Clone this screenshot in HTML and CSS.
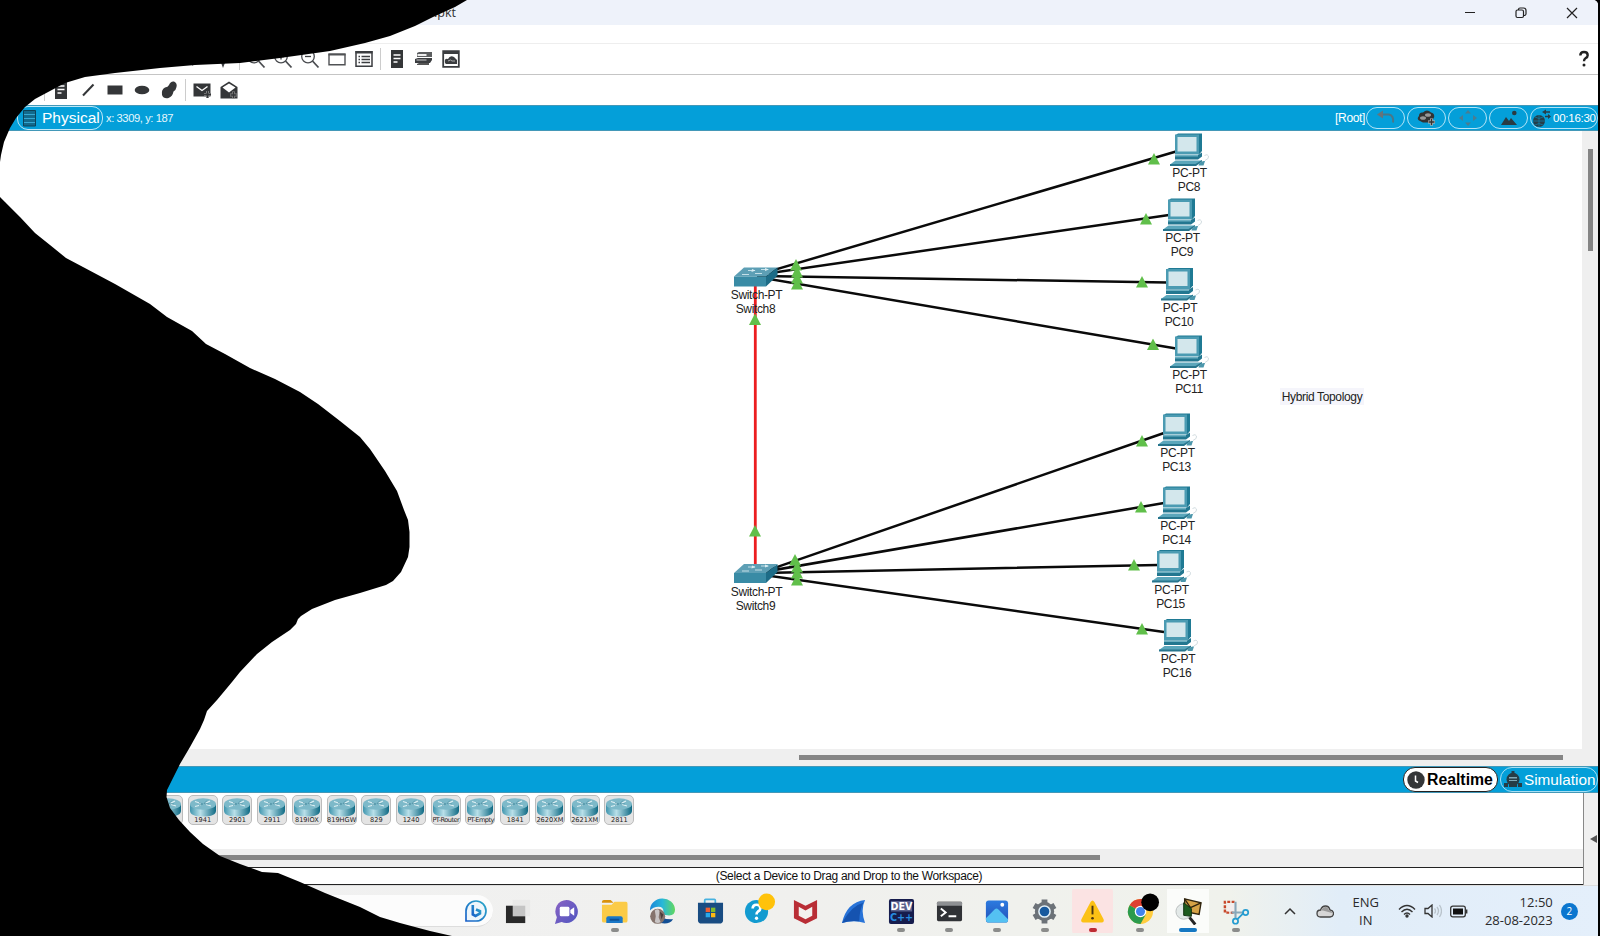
FILE: index.html
```html
<!DOCTYPE html>
<html lang="en">
<head>
<meta charset="utf-8">
<title>Packet Tracer</title>
<link rel="stylesheet" href="styles.css">
</head>
<body>
<svg class="defs" aria-hidden="true">
  <defs>
    <linearGradient id="steel" x1="0" x2="1"><stop offset="0" stop-color="#3f95ae"/><stop offset=".4" stop-color="#b9e0e9"/><stop offset="1" stop-color="#0f6a84"/></linearGradient>
    <linearGradient id="purple" x1="0" y1="0" x2="1" y2="1"><stop offset="0" stop-color="#8a63c4"/><stop offset="1" stop-color="#4f55c0"/></linearGradient>
    <linearGradient id="edge" x1="0" x2="1"><stop offset="0" stop-color="#1b86d8"/><stop offset=".5" stop-color="#28b8d8"/><stop offset="1" stop-color="#62d85e"/></linearGradient>
    <linearGradient id="bing" x1="0" y1="1" x2="1" y2="0"><stop offset="0" stop-color="#1b62c9"/><stop offset="1" stop-color="#2ba9c9"/></linearGradient>
    <linearGradient id="shot" x1="0" y1="0" x2="0" y2="1"><stop offset="0" stop-color="#2c7be0"/><stop offset="1" stop-color="#2351b8"/></linearGradient>
    <symbol id="pc" viewBox="0 0 40 33" overflow="visible">
      <path d="M5 2 8 0h24v17.500L29 21z" fill="#1f7a94"/>
      <path d="M5 1h24v20H5z" fill="#4b9bb2"/>
      <path d="M7.500 3.500h19v14.500h-19z" fill="#d3e7ec"/>
      <path d="M5 21.500h23l4-2.500v4l-4 3H5z" fill="#237790"/>
      <path d="M5 21.500h23v1.500H5z" fill="#6db0c2"/>
      <path d="M5.500 27H32l-6 4H0z" fill="#5ba6bb"/>
      <path d="M0 30.500h25.500L32 26.500v1.500l-6 4.500H0z" fill="#27758d"/>
      <path d="M29 30q2-3 6-2.500l-1.500 4.500h-5z" fill="#4b96ab"/>
      <path d="M35 27q4.500-2 3.500-4.500T34.500 22" fill="none" stroke="#d3dde1"/>
    </symbol>
    <symbol id="switch" viewBox="0 0 44 21">
      <path d="M0 10 10 1h33.500L32 10z" fill="#5d9fb5"/>
      <path d="M0 10h32v10H0z" fill="#398ba5"/>
      <path d="M32 10 43.500 1v8L32 20z" fill="#1d6c87"/>
      <path d="M14 4h7M27 3h7M8 8h7M21 7h7" stroke="#c4e0e8" stroke-width="1.100"/>
      <path d="m18 2.500 3.500 1.500-4 1.500M31 1.500l4 1.500-4 1.500" fill="#d8edf3"/>
    </symbol>
    <symbol id="tri" viewBox="0 0 12 12"><path d="M6 0l6 11.500H0z" fill="#60bf4a"/></symbol>
    <symbol id="router" viewBox="0 0 26 19">
      <path d="M0 6v6.500q0 6 13 6t13-6V6z" fill="url(#steel)"/>
      <ellipse cx="13" cy="6" rx="13" ry="5.700" fill="#7db9c9"/>
      <path d="m5 3.500 6 2M20 3l-5 2.500M5 8.500l6-1.500M21 8l-5-1.500" stroke="#dff0f4" stroke-width="1.200"/>
      <path d="m9 4.500 4 1.500-4 1.500M17 2.500l-3 3 5 .5" fill="none" stroke="#4b8ea2" stroke-width=".7"/>
    </symbol>
    <symbol id="note" viewBox="0 0 24 24"><path d="M6 3h12v18H6z" fill="#343638"/><path d="M8.500 8h7M8.500 11.500h7M8.500 15h4" stroke="#fff" stroke-width="1.500"/></symbol>
    <symbol id="mag" viewBox="0 0 24 24"><g fill="none" stroke="#4a4c50"><circle cx="10" cy="9.500" r="6.300" stroke-width="1.300"/><path d="m14.500 14 6 6.500" stroke-width="1.800"/></g></symbol>
  </defs>
</svg>

<div class="window">
  <header class="titlebar">
    <span class="filename">.pkt</span>
    <div class="controls">
      <svg width="12" height="12"><path d="M1 5.500h10" stroke="#222"/></svg>
      <svg width="12" height="12" fill="none" stroke="#222" stroke-width="1.200"><rect x="1" y="3" width="7.500" height="7.500" rx="1.500"/><path d="M3.500 3V2.500Q3.500 1 5 1h3.500Q11 1 11 3.500V7q0 1.500-2 1.500"/></svg>
      <svg width="12" height="12"><path d="m1 1 10 10M11 1 1 11" stroke="#222" stroke-width="1.200"/></svg>
    </div>
  </header>
  <div class="menubar"></div>

  <div class="toolbar main-tools">
    <svg viewBox="0 0 24 24"><path d="m8 18 5-6" stroke="#3b3d40" stroke-width="2"/></svg>
    <svg viewBox="0 0 24 24"><path d="M9 13h6l-3 8z" fill="#3b3d40"/></svg>
    <i class="sep"></i>
    <svg><use href="#mag"/></svg>
    <svg><use href="#mag"/><path d="M7 9.500h6M10 6.500v6" stroke="#3b3d40" stroke-width="1.300"/></svg>
    <svg><use href="#mag"/><path d="M7 9.500h6" stroke="#3b3d40" stroke-width="1.300"/></svg>
    <svg viewBox="0 0 24 24"><path d="M4 7.200h16v10.600H4z" fill="#fff" stroke="#505255" stroke-width="1.400"/><path d="M3.500 6.500h17v2h-17z" fill="#505255"/></svg>
    <svg viewBox="0 0 24 24"><path d="M4 4.700h16v14.600H4z" fill="#fff" stroke="#3b3d40" stroke-width="1.500"/><path d="M3.500 4h17v2.500h-17z" fill="#3b3d40"/><path d="M9.500 9.500H18M9.500 12.500H18M9.500 15.500H18M6.500 9.500H8M6.500 12.500H8M6.500 15.500H8" stroke="#3b3d40" stroke-width="1.400"/></svg>
    <i class="sep"></i>
    <svg><use href="#note"/></svg>
    <svg viewBox="0 0 24 24"><path d="m5 6 2-1h13v5H5z" fill="#5c5e60"/><path d="M5.500 7h9v2h-9z" fill="#eee"/><path d="m3 12 3-1h14v2l-2 3H3z" fill="#3b3d40"/><path d="m5 17 2-1h10v2H5z" fill="#555"/><path d="M4.500 13h10" stroke="#ccc"/></svg>
    <svg viewBox="0 0 24 24"><path d="M4.200 4.200h15.600v15.600H4.200z" fill="#fff" stroke="#3b3d40" stroke-width="1.800"/><path d="M4 4h16v3H4z" fill="#3b3d40"/><path d="M6 16q-1-5 3-4 2-4 6-2l3 3v4H7z" fill="#3b3d40"/><path d="M9 14q3-2 4 0h3" fill="none" stroke="#aaa"/></svg>
    <svg class="help" viewBox="0 0 12 18"><path d="M2.300 5.500Q2.300 2 6 2t3.700 3.200Q9.700 7 7.500 8.300 6 9.200 6 11.300" fill="none" stroke="#222" stroke-width="2.400"/><circle cx="6" cy="15" r="1.500" fill="#222"/></svg>
  </div>

  <div class="toolbar draw-tools">
    <i class="sep"></i>
    <svg><use href="#note"/></svg>
    <svg viewBox="0 0 24 24"><path d="M7 17.500 17.500 6.500" stroke="#343638" stroke-width="2"/></svg>
    <svg viewBox="0 0 24 24"><path d="M4.500 7.500h15v9h-15z" fill="#343638"/></svg>
    <svg viewBox="0 0 24 24"><ellipse cx="12" cy="12" rx="7.300" ry="4.300" fill="#343638"/></svg>
    <svg viewBox="0 0 24 24"><path d="M12 7q1.500-4 5-3.500 3.500 1.500 2.500 5.500-.5 3-3 4.500-1 5-5 6.500-5 1-6.500-3Q4 11.500 8 9.500q3-.5 4-2.500z" fill="#343638"/></svg>
    <i class="sep"></i>
    <svg viewBox="0 0 24 24"><path d="M3.500 5.500h17v13h-17z" fill="#343638"/><path d="m6.500 8.500 5.500 4 5.500-4" fill="none" stroke="#fff" stroke-width="1.400"/><path d="M17.500 13v7M14 16.500h7" stroke="#aaa" stroke-width="3"/><path d="M17.500 13v7M14 16.500h7" stroke="#343638" stroke-width="1.800"/></svg>
    <svg viewBox="0 0 24 24"><path d="m3.500 9 8.500-5.500L20.500 9v11.500h-17z" fill="#343638"/><path d="m5.500 9.500 6.500-4 6.500 4-6.500 5z" fill="#fff"/><path d="M16.500 13.500v7M13 17h7" stroke="#888" stroke-width="3"/><path d="M16.500 14v6M13.500 17h6" stroke="#343638" stroke-width="1.500"/></svg>
  </div>

  <div class="bluebar view-bar">
    <div class="tab-physical">
      <svg width="13" height="17"><path d="M.5.500h12v15.500H.5z" fill="#126a8d" stroke="#0d4258"/><path d="M1 4.500h11M1 8.500h11M1 12.500h11" stroke="#35a8d3" stroke-width="1.200"/></svg>
      <span>Physical</span>
    </div>
    <span class="coords">x: 3309, y: 187</span>
    <span class="root">[Root]</span>
    <div class="pills">
      <span class="pill"><svg width="20" height="16"><path d="M4 4.500h9q5 1 4 8" fill="none" stroke="#4a7788" stroke-width="2"/><path d="m1 4.500 6-4v8z" fill="#67747a"/></svg></span>
      <span class="pill"><svg width="20" height="16"><path d="M3 11q-4-2-1-5 0-4 4-3.500 4-4 8 0 4 1 3 5l-3 5H6z" fill="#333"/><ellipse cx="6" cy="8" rx="3" ry="1.800" fill="#999"/><ellipse cx="11" cy="5" rx="3" ry="1.800" fill="#999"/><path d="M14.500 8.500v7M11 12h7" stroke="#bbb" stroke-width="3"/><path d="M14.500 9v6M11.500 12h6" stroke="#333" stroke-width="1.500"/></svg></span>
      <span class="pill"><svg width="20" height="16" fill="#4b7d91"><path d="M10 0l3 3.500H7zM10 16l3-3.500H7zM1 8l4-3v6zM19 8l-4-3v6z"/></svg></span>
      <span class="pill"><svg width="20" height="16" fill="#293b43"><path d="m2 15 5-8 3 4 2-3 6 7zM13 3a2.300 2.300 0 1 1 4.600 0 2.300 2.300 0 0 1-4.600 0z"/></svg></span>
      <span class="pill clock"><svg width="19" height="19"><circle cx="7" cy="12" r="6" fill="#263d47"/><path d="M1 12h12M7 6v12M3 8q4 3 8 0M3 16q4-3 8 0" fill="none" stroke="#0d7da7" stroke-width=".8"/><path d="M18 3h-5M18 7.500h-5" stroke="#263d47" stroke-width="1.500"/><path d="m10 3 4-2.500v5zM19 7.500 16 5v5z" fill="#263d47"/></svg>00:16:30</span>
    </div>
  </div>

  <main class="workspace">
    <svg class="canvas" viewBox="0 131 1582 618">
      <g stroke="#0a0a0a" stroke-width="2.500">
        <path d="M757 275 1176 151.500M757 275 1169 215M757 276 1167 282.500M757 277 1176 348.500"/>
        <path d="M757 574 1164 433M757 573 1164 503M757 573 1158 565M757 574 1164 632"/>
      </g>
      <path d="M755.300 286v279" stroke="#ec1e20" stroke-width="2.800"/>
      <g>
        <use href="#switch" x="734" y="266.500" width="44" height="21"/>
        <use href="#switch" x="734" y="563" width="44" height="21"/>
        <use href="#pc" x="1170" y="133.500" width="40" height="33"/>
        <use href="#pc" x="1163" y="198.500" width="40" height="33"/>
        <use href="#pc" x="1161" y="268" width="40" height="33"/>
        <use href="#pc" x="1170" y="335.500" width="40" height="33"/>
        <use href="#pc" x="1158" y="413.500" width="40" height="33"/>
        <use href="#pc" x="1158" y="486.500" width="40" height="33"/>
        <use href="#pc" x="1152" y="550" width="40" height="33"/>
        <use href="#pc" x="1159" y="619" width="40" height="33"/>
      </g>
      <g>
        <use href="#tri" x="1148" y="153" width="12" height="12"/>
        <use href="#tri" x="1140" y="213" width="12" height="12"/>
        <use href="#tri" x="1136" y="276" width="12" height="12"/>
        <use href="#tri" x="1147" y="338.500" width="12" height="12"/>
        <use href="#tri" x="1136" y="435" width="12" height="12"/>
        <use href="#tri" x="1135" y="501" width="12" height="12"/>
        <use href="#tri" x="1128" y="559" width="12" height="12"/>
        <use href="#tri" x="1136" y="623" width="12" height="12"/>
        <use href="#tri" x="790" y="259" width="12" height="12"/>
        <use href="#tri" x="791" y="266" width="12" height="12"/>
        <use href="#tri" x="791" y="272" width="12" height="12"/>
        <use href="#tri" x="791" y="278" width="12" height="12"/>
        <use href="#tri" x="789" y="554" width="12" height="12"/>
        <use href="#tri" x="791" y="561" width="12" height="12"/>
        <use href="#tri" x="791" y="567" width="12" height="12"/>
        <use href="#tri" x="791" y="574" width="12" height="12"/>
        <use href="#tri" x="749" y="313.500" width="12" height="12"/>
        <use href="#tri" x="749" y="525" width="12" height="12"/>
      </g>
      <rect x="1280" y="388" width="84" height="17" fill="#f5f5fb"/>
      <g class="labels">
        <text x="756.500" y="299">Switch-PT</text><text x="755.500" y="313">Switch8</text>
        <text x="756.500" y="596">Switch-PT</text><text x="755.500" y="610">Switch9</text>
        <text x="1189.500" y="177">PC-PT</text><text x="1189" y="191">PC8</text>
        <text x="1182.500" y="242">PC-PT</text><text x="1182" y="256">PC9</text>
        <text x="1180" y="311.500">PC-PT</text><text x="1179" y="325.500">PC10</text>
        <text x="1189.500" y="379">PC-PT</text><text x="1189" y="393">PC11</text>
        <text x="1177.500" y="457">PC-PT</text><text x="1176.500" y="471">PC13</text>
        <text x="1177.500" y="530">PC-PT</text><text x="1176.500" y="544">PC14</text>
        <text x="1171.500" y="593.500">PC-PT</text><text x="1170.500" y="607.500">PC15</text>
        <text x="1178" y="662.500">PC-PT</text><text x="1177" y="676.500">PC16</text>
        <text x="1322" y="401">Hybrid Topology</text>
      </g>
    </svg>
    <div class="vscroll"><i></i></div>
  </main>
  <div class="hscroll canvas-scroll"><i></i></div>

  <div class="bluebar mode-bar">
    <span class="mode realtime"><svg width="18" height="18"><circle cx="9" cy="9" r="8.700" fill="#343638"/><path d="M8.500 4.500V10l2.500 1.500" fill="none" stroke="#fff" stroke-width="1.500"/></svg>Realtime</span>
    <span class="mode simulation"><svg width="18" height="17" fill="#263d47"><path d="M7.500 0h3v3h-3z"/><circle cx="9" cy="8.300" r="6.500"/><path d="M0 12h4v4H0zM14 12h4v4h-4zM5 13h8v3H5z"/><path d="M5 6h8v1.500H5zM5 9h8v1H5z" fill="#7fa9b8"/></svg>Simulation</span>
  </div>

  <div class="bottom">
    <section class="devices">
      <div class="device-list">
        <div class="device"><svg><use href="#router"/></svg><span>4331</span></div>
        <div class="device"><svg><use href="#router"/></svg><span>1941</span></div>
        <div class="device"><svg><use href="#router"/></svg><span>2901</span></div>
        <div class="device"><svg><use href="#router"/></svg><span>2911</span></div>
        <div class="device"><svg><use href="#router"/></svg><span>819IOX</span></div>
        <div class="device"><svg><use href="#router"/></svg><span>819HGW</span></div>
        <div class="device"><svg><use href="#router"/></svg><span>829</span></div>
        <div class="device"><svg><use href="#router"/></svg><span>1240</span></div>
        <div class="device tight"><svg><use href="#router"/></svg><span>PT-Router</span></div>
        <div class="device tight"><svg><use href="#router"/></svg><span>PT-Empty</span></div>
        <div class="device"><svg><use href="#router"/></svg><span>1841</span></div>
        <div class="device"><svg><use href="#router"/></svg><span>2620XM</span></div>
        <div class="device"><svg><use href="#router"/></svg><span>2621XM</span></div>
        <div class="device"><svg><use href="#router"/></svg><span>2811</span></div>
      </div>
      <div class="hscroll device-scroll"><i></i></div>
      <div class="status">(Select a Device to Drag and Drop to the Workspace)</div>
    </section>
    <aside class="collapse"><svg width="7" height="8"><path d="M0 4l7-4v8z" fill="#555"/></svg></aside>
  </div>

  <footer class="taskbar">
    <div class="search"><svg width="24" height="24" viewBox="0 0 24 24"><path d="M2 22V12A10 10 0 1 1 12 22z" fill="#eef6fb" stroke="url(#bing)" stroke-width="1.700"/><path d="M8.800 6v9.500l2.700 1.500 4.500-2.500v-2.300l-4-1.700" fill="none" stroke="url(#bing)" stroke-width="2.600"/></svg></div>
    <div class="apps">
      <div class="app"><svg viewBox="0 0 28 28"><path d="M1 8h20v18H1z" fill="#292929"/><path d="M8 2h18v17H8z" fill="#e6e6e6" opacity=".82"/></svg></div>
      <div class="app"><svg viewBox="0 0 28 28"><path d="M14 2a12 12 0 1 1-5 23l-7 2 2-7A12 12 0 0 1 14 2z" fill="url(#purple)"/><rect x="7" y="9" width="10" height="10" rx="1.500" fill="#fff"/><path d="m18 12.500 4-3v9l-4-3z" fill="#fff"/></svg></div>
      <div class="app run"><svg viewBox="0 0 28 28"><path d="M1 4q0-2 2-2h7l3 3H1z" fill="#d9920c"/><path d="M1 7h10l3-3h12q1.500 0 1.500 2v17.500q0 2-2 2H3q-2 0-2-2z" fill="#fbcb47"/><path d="M5.500 26v-5q0-2 2-2h13q2 0 2 2v5z" fill="#1a78c8"/><path d="M9 22.500h10" stroke="#0e4f94" stroke-width="2"/></svg></div>
      <div class="app"><svg viewBox="0 0 28 28"><path d="M1 13A13 12 0 0 1 27 12q0 7-8 6-5 0-4-4 0-5-5-5-6 0-9 4z" fill="url(#edge)"/><path d="M12 26q-6-7 0-11 0 8 13 7-4 6-13 4z" fill="#124f95"/><circle cx="9" cy="19" r="7.800" fill="#85736c"/><path d="M6 13q4-3 5 1l-1 6 2 5q-3 2-6 0l1-6z" fill="#c9c5c5"/><path d="m11 14 4 3-2 5z" fill="#4c3e3c"/></svg></div>
      <div class="app"><svg viewBox="0 0 28 28"><path d="M8 6V2.500q0-1 1-1h9q1 0 1 1V6" fill="none" stroke="#47b2e0" stroke-width="1.800"/><path d="M1 5h26v18q0 3.500-4 3.500H5q-4 0-4-3.500z" fill="#194c82"/><path d="M9 10h4.500v4.500H9z" fill="#f05c31"/><path d="M14.500 10H19v4.500h-4.500z" fill="#7fba2c"/><path d="M9 15.500h4.500V20H9z" fill="#28a8ea"/><path d="M14.500 15.500H19V20h-4.500z" fill="#fdb913"/></svg></div>
      <div class="app"><svg viewBox="0 0 28 28" overflow="visible"><circle cx="13" cy="14" r="12" fill="#139bd0"/><path d="M9 11q0-4 4-4t4 3.500q0 2-2.500 3.500-1.500 1-1.500 3" fill="none" stroke="#fff" stroke-width="2.800"/><circle cx="13" cy="21" r="1.700" fill="#fff"/><circle cx="23.500" cy="4" r="8.700" fill="#ffc20a"/></svg></div>
      <div class="app"><svg viewBox="0 0 28 28"><path d="m2 2 12 6 12-6v19l-12 6-12-6z" fill="#b92d35"/><path d="m7 9 7 4 7-4v9.500l-7 3.500-7-3.500z" fill="#f3f0ee"/></svg></div>
      <div class="app"><svg viewBox="0 0 28 28"><path d="M2 26Q7 4 26 2q-5 10 0 24-12-4-24 0z" fill="#2873d8"/><path d="M2 26Q12 8 24 5q-4 9-4 19-10-1-18 2z" fill="#1553b0"/></svg></div>
      <div class="app run"><svg viewBox="0 0 28 28"><rect x="1" y="1" width="26" height="26" rx="2" fill="#161c4d"/><path d="M3 3h22v11H3z" fill="#59618c"/><text class="dev" x="14" y="12.500">DEV</text><text class="dev cpp" x="14" y="24">C++</text></svg></div>
      <div class="app run"><svg viewBox="0 0 28 28"><rect x="1" y="4" width="26" height="20" rx="1.500" fill="#303236"/><path d="M1 5q0-1 1-1h24q1 0 1 1v3H1z" fill="#8e9093"/><path d="m5 11 5 4-5 4M13 19h8" fill="none" stroke="#fff" stroke-width="2"/></svg></div>
      <div class="app run"><svg viewBox="0 0 28 28"><rect x="3" y="2.500" width="23" height="23" rx="3" fill="url(#shot)"/><path d="m3 21 9-9q2-2 4 0l10 10q0 3.500-3 3.500H6q-3 0-3-4z" fill="#54c1f2"/><circle cx="20" cy="7" r="2" fill="#fff"/></svg></div>
      <div class="app run"><svg viewBox="0 0 28 28"><g fill="#6c7278"><circle cx="14" cy="14" r="10"/><g stroke="#6c7278" stroke-width="6"><path d="M14 1.500v25M3.200 7.800l21.600 12.400M3.200 20.200 24.800 7.800"/></g></g><circle cx="14" cy="14" r="5.800" fill="#17599e" stroke="#e3f0f8" stroke-width="1.600"/></svg></div>
      <div class="app run alert"><svg viewBox="0 0 28 28"><path d="M14 2.500q1 0 2 1.700L25.500 22q1 3-2 3.500h-19q-3-.5-2-3.500L12 4.200q1-1.700 2-1.700z" fill="#fcc115"/><path d="M14 8v9" stroke="#4c3510" stroke-width="2"/><circle cx="14" cy="21" r="1.400" fill="#4c3510"/></svg></div>
      <div class="app run"><svg viewBox="0 0 28 28" overflow="visible"><circle cx="14" cy="14" r="13" fill="#ffcd40"/><path d="M14 14 2.700 7.500A13 13 0 0 1 25.300 7.500z" fill="#df4032"/><path d="M2.700 7.500A13 13 0 0 0 14 27l5.500-10L14 14z" fill="#2b9b4d"/><path d="M14 1a13 13 0 0 1 11.300 6.500H14z" fill="#df4032"/><circle cx="14" cy="14" r="6" fill="#fff"/><circle cx="14" cy="14" r="4.700" fill="#4284ee"/><circle cx="24" cy="4.500" r="9.200" fill="#000"/></svg></div>
      <div class="app run active"><svg viewBox="0 0 28 28"><circle cx="9" cy="14" r="8" fill="#e3e9e8" stroke="#b8bdbd"/><path d="m10 1 17 4-2 12-15-3z" fill="#d6a246" stroke="#30240e" stroke-width="1.400"/><path d="m10 1 6 9 11-5" fill="none" stroke="#30240e" stroke-width="1.400"/><path d="m9 5 8 6v8l-8-1z" fill="#1d5a1e" stroke="#123312"/><path d="m15 20 6 7.500" stroke="#252525" stroke-width="3"/></svg></div>
      <div class="app run"><svg viewBox="0 0 28 28" overflow="visible"><path d="M13 4H3v11h11" fill="none" stroke="#c8492c" stroke-width="2.500" stroke-dasharray="3 1.500"/><path d="M5.500 6h10v8h-10z" fill="#f4eeee"/><path d="M14 4v17M10 15h12" stroke="#88a8ba" stroke-width="2.200"/><g fill="none" stroke="#269cd0" stroke-width="1.800"><circle cx="24.500" cy="15" r="2.700"/><circle cx="14" cy="24" r="2.700"/><path d="m22 16-6 6"/></g></svg></div>
    </div>
    <div class="tray">
      <svg class="chevron" width="12" height="8"><path d="m1 7 5-5 5 5" fill="none" stroke="#333" stroke-width="1.500"/></svg>
      <svg class="cloud" width="18" height="13"><path d="M4.500 12Q1 12 1 8.500T4.500 5Q6 1 9.500 1T14 5q3.500.5 3.500 3.500T14 12z" fill="#d6d6d6" stroke="#444" stroke-width="1.300"/><path d="M5 5.500Q7 2 9.500 2T13 5.500q3 .5 3 2.500L7 5.500z" fill="#999"/></svg>
      <div class="lang"><span>ENG</span><span>IN</span></div>
      <svg class="wifi" width="18" height="14" fill="none" stroke="#333" stroke-width="1.400"><path d="M1 5.500q8-8 16 0M3.500 8q5.500-5.500 11 0M6 10.500q3-3 6 0"/><circle cx="9" cy="12" r="1" fill="#333"/></svg>
      <svg class="speaker" width="18" height="14" fill="none" stroke="#333" stroke-width="1.300"><path d="M1 4.500h3L8 1v12L4 9.500H1z"/><path d="M10.500 4.500q2 2.500 0 5M13 3q3 4 0 8M15.500 1q4 6 0 12" stroke="#b9c3cb"/></svg>
      <svg class="battery" width="18" height="13"><rect x=".7" y="1.200" width="14.600" height="10.600" rx="2" fill="none" stroke="#333" stroke-width="1.300"/><path d="M3 3.500h10v6H3z" fill="#111"/><path d="M16.500 4.500v4" stroke="#333" stroke-width="1.800"/></svg>
      <div class="datetime"><span>12:50</span><span>28-08-2023</span></div>
      <span class="count">2</span>
    </div>
  </footer>
</div>

<svg class="blob" viewBox="0 0 470 936" width="470" height="936">
  <path d="M0 0H467L455 7 433 17 415 26 390 36 365 43 330 51 280 58 240 63 195 65 160 68 115 73 85 77 65 83 50 91 35 99 25 107 16 118 10 128 4 142 1 155 0 162zM0 197 5 202 20 217 35 233 50 245 66 258 83 267 115 284 150 304 167 317 192 331 206 344 225 354 250 368 275 379 300 392 318 404 340 421 360 437 370 449 385 471 397 491 404 510 408 520 409.500 532 409.500 547 408 557 401 572 393 581 386 585 360 593 335 600 312 609 301 616 298 619 296 624 290 630 272 642 257 654 240 672 232 682 217 700 207 711 204 720 200 729 190 747 180 764 173 778 167 790 166.500 797 170 808 179 820 190 832 203 844 220 856 240 864 262 872 278 873 300 882 325 893 360 907 380 917 400 923 430 931 452 936H0z"/>
</svg>
</body>
</html>
```
FILE: styles.css
```css
* { box-sizing: border-box; }

body {
  margin: 0;
  width: 1600px;
  height: 936px;
  overflow: hidden;
  background: #000;
  font-family: "Liberation Sans", Arial, sans-serif;
}

svg { display: block; flex: none; }

.defs { position: absolute; width: 0; height: 0; }

.window {
  width: 1598px;
  height: 936px;
  display: flex;
  flex-direction: column;
  background: #fff;
  border-top-right-radius: 5px;
  overflow: hidden;
}

/* Title and tool bars */
.titlebar {
  height: 25px;
  flex: none;
  display: flex;
  align-items: center;
  justify-content: space-between;
  padding: 0 20px 0 434px;
  background: #eef2fa;
}
.filename { font: 12.5px "Open Sans", sans-serif; color: #333; }
.controls { display: flex; gap: 39px; }
.menubar { height: 19px; flex: none; border-bottom: 1px solid #eee; }

.toolbar {
  display: flex;
  align-items: center;
  gap: 3px;
  flex: none;
}
.toolbar svg { width: 24px; height: 24px; }
.toolbar .sep { width: 1px; height: 22px; margin: 0 1px; background: #ccc; }
.main-tools { height: 31px; padding: 0 8px 0 184px; border-bottom: 1px solid #c5c5c5; }
.toolbar .help { width: 12px; height: 18px; margin-left: auto; }
.draw-tools { height: 30px; padding-left: 43px; }

.bluebar {
  flex: none;
  display: flex;
  align-items: center;
  height: 26px;
  background: #049fd9;
  color: #fff;
  border-top: 1px solid #4398b8;
  border-bottom: 1px solid #4398b8;
}
.tab-physical {
  display: flex;
  align-items: center;
  gap: 6px;
  width: 86px;
  height: 24px;
  margin-left: 17px;
  padding-left: 5px;
  border: 1px solid #bde8f8;
  border-radius: 11px;
  font-size: 15.5px;
}
.coords { margin-left: 3px; padding-bottom: 1px; font-size: 11.2px; letter-spacing: -0.42px; color: #e6f7fd; }
.root { margin-left: auto; padding-bottom: 1px; font-size: 12px; letter-spacing: -0.35px; }
.pills { display: flex; gap: 2px; margin-left: 1px; }
.pill {
  display: flex;
  align-items: center;
  justify-content: center;
  width: 39px;
  height: 22px;
  border: 1px solid #b4e5f7;
  border-radius: 11px;
}
.pill.clock { width: 68px; gap: 2px; justify-content: flex-start; padding-left: 1px; font-size: 11.5px; letter-spacing: -0.25px; }

/* Workspace */
.workspace { height: 618px; flex: none; display: grid; grid-template-columns: 1582px 16px; }
.canvas { width: 1582px; height: 618px; }
.labels { font-size: 12px; letter-spacing: -0.35px; fill: #222; text-anchor: middle; }
.vscroll { background: #efefef; padding: 18px 5px 0 6px; }
.vscroll i { display: block; height: 102px; background: #858585; }
.hscroll { flex: none; background: #efefef; padding-top: 6px; }
.hscroll i { display: block; height: 5px; background: #858585; }
.canvas-scroll { height: 17px; padding-left: 799px; }
.canvas-scroll i { width: 764px; }

.mode-bar { height: 27px; justify-content: flex-end; gap: 2px; }
.mode {
  display: flex;
  align-items: center;
  height: 25px;
  border-radius: 12px;
  font-size: 15.3px;
}
.realtime { width: 95px; gap: 2px; padding-left: 3px; background: #fff; color: #000; border: 1px solid #222; font-weight: bold; font-size: 15.8px; }
.simulation { width: 98px; gap: 2px; padding-left: 3px; border: 1px solid #a7dff4; white-space: nowrap; }

/* Device palette */
.bottom { flex: none; height: 92px; display: grid; grid-template-columns: 1584px 14px; }
.devices { display: flex; flex-direction: column; border-right: 1px solid #888; }
.device-list { display: flex; gap: 4.72px; height: 56px; padding: 2px 0 0 153px; }
.device {
  width: 30px;
  height: 30px;
  display: flex;
  flex-direction: column;
  align-items: center;
  border: 1px solid #bcbcbc;
  border-radius: 5px;
  background: #e4e4e4;
  padding-top: 2px;
}
.device svg { width: 26px; height: 19px; }
.device span { font: 6.6px/7px "DejaVu Sans", sans-serif; color: #222; white-space: nowrap; }
.device.tight span { letter-spacing: -0.55px; }
.device-scroll { height: 18px; }
.device-scroll i { width: 1100px; }
.status {
  height: 18px;
  border: solid #222;
  border-width: 1px 0 1px;
  padding-left: 115px;
  text-align: center;
  font-size: 12px;
  letter-spacing: -0.33px;
  line-height: 17px;
  color: #111;
}
.collapse { display: flex; align-items: center; justify-content: flex-end; padding-right: 1px; background: #f0f0f0; }

/* Taskbar */
.taskbar {
  height: 51px;
  flex: none;
  display: flex;
  align-items: center;
  background: linear-gradient(90deg, #f1f1f2 0, #f0f0ee 800px, #f0f2ec 1230px, #e1edf8 1340px, #e4effb 1598px);
  border-top: 1px solid #ddd;
}
.search {
  width: 493px;
  height: 32px;
  display: flex;
  align-items: center;
  justify-content: flex-end;
  padding-right: 5px;
  border-radius: 16px;
  background: #fcfcfc;
  border-bottom: 1px solid #ddd;
}
.apps { display: flex; margin-left: 2px; }
.app { position: relative; display: grid; place-items: center; width: 47.8px; height: 44px; }
.app svg { width: 27px; height: 27px; }
.app.run::after {
  content: "";
  position: absolute;
  bottom: 1px;
  left: 20px;
  width: 8px;
  height: 4px;
  border-radius: 2px;
  background: #8b8c8b;
}
.app.alert { background: #fbe3e3; background-clip: content-box; padding: 0 3px; border-radius: 4px; }
.app.alert::after { background: #bd2c33; }
.app.active { background: #fbfcfa; background-clip: content-box; padding: 0 3px; }
.app.active::after { left: 15px; width: 18px; background: #1678c2; }
.dev { font: bold 10px "DejaVu Sans", sans-serif; fill: #fff; text-anchor: middle; }
.dev.cpp { fill: #278de0; }

.tray { display: flex; align-items: center; margin-left: 24px; color: #2b2b2b; font: 13px/18px "Open Sans", "Noto Sans", sans-serif; }
.cloud { margin-left: 20px; }
.lang { display: flex; flex-direction: column; align-items: center; width: 30px; margin-left: 17px; }
.wifi { margin-left: 17px; }
.speaker { margin-left: 8px; }
.battery { margin-left: 8px; }
.datetime { display: flex; flex-direction: column; align-items: flex-end; width: 70px; margin-left: 15px; }
.count {
  width: 17px;
  height: 17px;
  margin-left: 8px;
  border-radius: 50%;
  background: #0b76cf;
  color: #fff;
  font-size: 10px;
  line-height: 17px;
  text-align: center;
}

/* Black shape lying over the left side of the window */
.blob { position: absolute; left: 0; top: 0; }
```
